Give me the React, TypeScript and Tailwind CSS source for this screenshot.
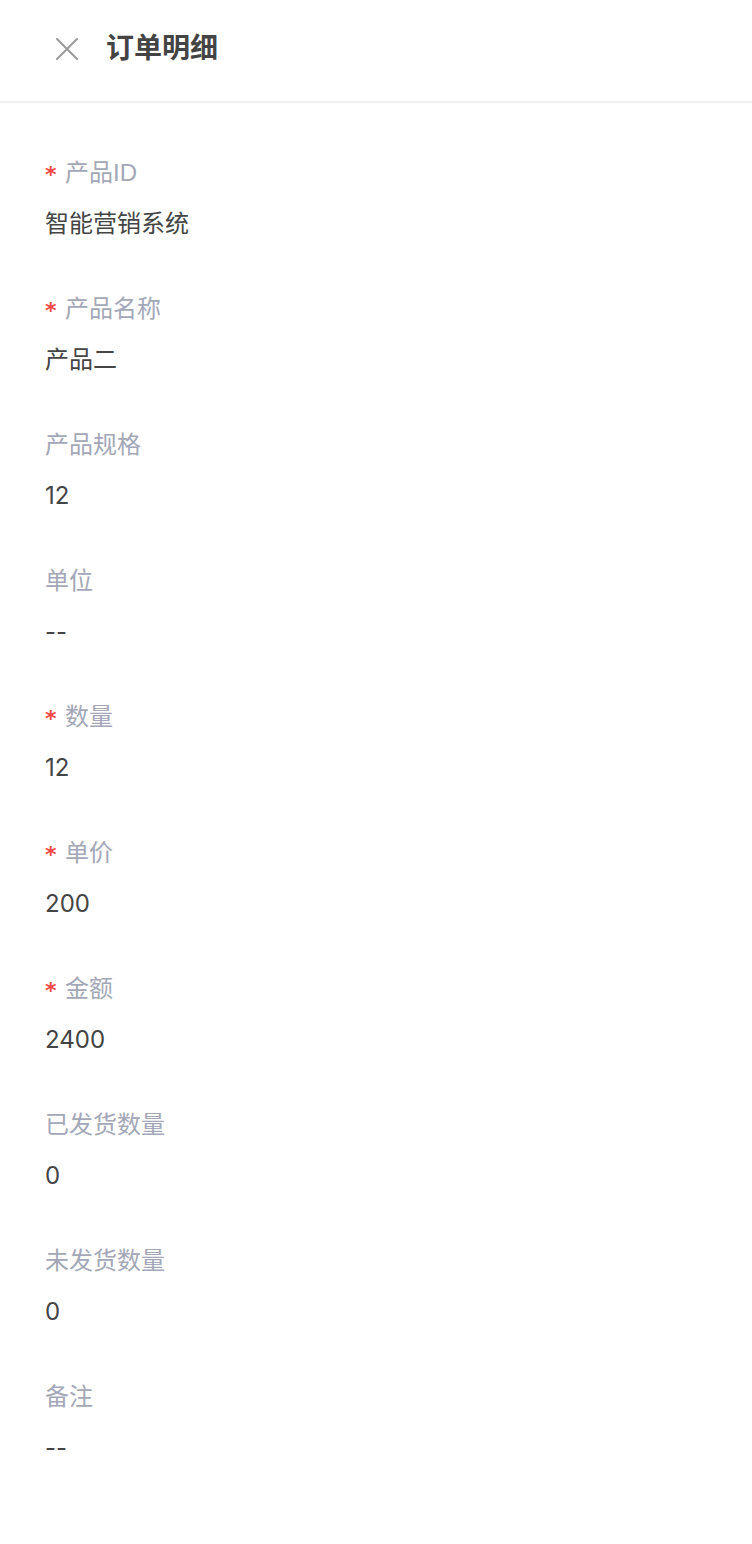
import React from "react";

interface Field {
  label: string;
  value: string;
  required?: boolean;
}

const FIELDS: Field[] = [
  { label: "产品ID", value: "智能营销系统", required: true },
  { label: "产品名称", value: "产品二", required: true },
  { label: "产品规格", value: "12" },
  { label: "单位", value: "--" },
  { label: "数量", value: "12", required: true },
  { label: "单价", value: "200", required: true },
  { label: "金额", value: "2400", required: true },
  { label: "已发货数量", value: "0" },
  { label: "未发货数量", value: "0" },
  { label: "备注", value: "--" },
];

const FONT = "font-['Liberation_Sans','Noto_Sans_CJK_SC',sans-serif]";

export default function App(): React.ReactElement {
  return (
    <div className={`min-h-[1544px] w-[752px] bg-white ${FONT}`}>
      {/* Header */}
      <div className="flex h-[103px] items-center border-b-2 border-[#f0f0f0] pb-[4px] pl-[56px]">
        <svg width="22" height="22" viewBox="0 0 22 22" className="shrink-0">
          <path d="M1 1L21 21M21 1L1 21" stroke="#9a9a9a" strokeWidth="2" strokeLinecap="round" />
        </svg>
        <h1 className="ml-[28px] text-[28px] font-bold leading-none text-[#444]">订单明细</h1>
      </div>

      {/* Fields */}
      <div className="flex flex-col gap-[55px] pl-[45px] pt-[55px]">
        {FIELDS.map((f) => (
          <div key={f.label} className="flex flex-col gap-[21px]">
            <div className="flex h-[30px] items-center text-[24px] leading-[30px] text-[#a3a7b7]">
              {f.required && (
                <span className="mr-[10px] w-[10px] pt-[4px] font-['DejaVu_Sans',sans-serif] text-[22px] font-bold leading-none text-[#f04a4a]">
                  *
                </span>
              )}
              <span>{f.label}</span>
            </div>
            <div className="h-[30px] font-['Inter','Noto_Sans_CJK_SC',sans-serif] text-[24px] leading-[30px] text-[#444]">
              {f.value}
            </div>
          </div>
        ))}
      </div>
    </div>
  );
}
